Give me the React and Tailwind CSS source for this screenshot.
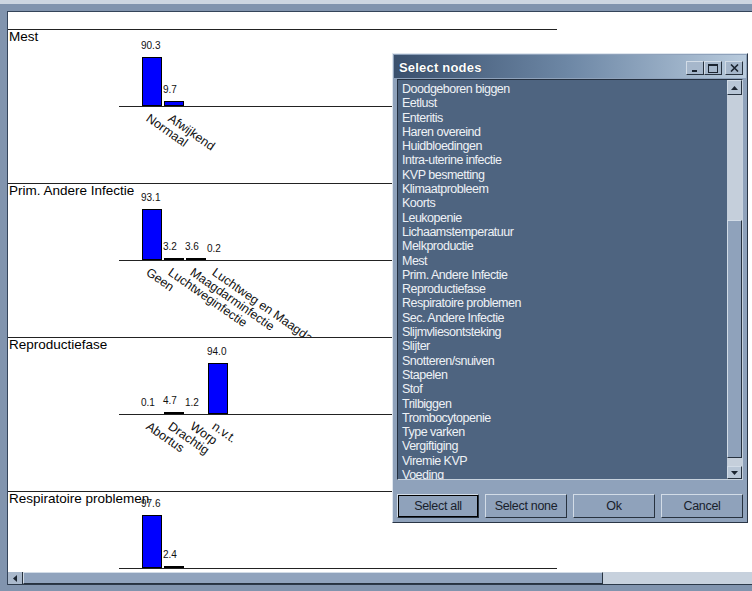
const charts = [
  { title: "Mest", bars: [["Normaal", 90.3], ["Afwijkend", 9.7]] },
  {
    title: "Prim. Andere Infectie",
    bars: [["Geen", 93.1], ["Luchtweginfectie", 3.2], ["Maagdarminfectie", 3.6], ["Luchtweg en Maagdarminfectie", 0.2]],
  },
  { title: "Reproductiefase", bars: [["Abortus", 0.1], ["Drachtig", 4.7], ["Worp", 1.2], ["n.v.t.", 94.0]] },
  { title: "Respiratoire problemen", bars: [["Nee", 97.6], ["Ja", 2.4]] },
];

const nodes = [
  "Doodgeboren biggen", "Eetlust", "Enteritis", "Haren overeind", "Huidbloedingen", "Intra-uterine infectie",
  "KVP besmetting", "Klimaatprobleem", "Koorts", "Leukopenie", "Lichaamstemperatuur", "Melkproductie", "Mest",
  "Prim. Andere Infectie", "Reproductiefase", "Respiratoire problemen", "Sec. Andere Infectie",
  "Slijmvliesontsteking", "Slijter", "Snotteren/snuiven", "Stapelen", "Stof", "Trilbiggen", "Trombocytopenie",
  "Type varken", "Vergiftiging", "Viremie KVP", "Voeding",
];

const raised = "border border-t-[#d2dce7] border-l-[#d2dce7] border-r-[#27323f] border-b-[#27323f]";

const Bar = ({ value }) => {
  const h = Math.floor(value * 0.55);
  return (
    <div className="w-[22px] flex flex-col items-start justify-end">
      <span className="-ml-px mb-[6px] text-[10px] leading-none text-[#111]">{value.toFixed(1)}</span>
      {h > 0 && <div className="w-[20px] border border-black bg-[#0000ff]" style={{ height: Math.max(h, 2) }} />}
    </div>
  );
};

const Chart = ({ title, bars }) => (
  <div className="grid h-[154px] border-b border-[#222] overflow-hidden">
    <div className="[grid-area:1/1] pl-px text-[13.5px] leading-none text-black">{title}</div>
    <div className="[grid-area:1/1] ml-[111px] w-[438px] flex flex-col">
      <div className="h-[77px] border-b border-[#222] flex items-end pl-[23px]">
        {bars.map(([name, v]) => (
          <Bar key={name} value={v} />
        ))}
      </div>
      <div className="flex pl-[32px] -mt-[2px]">
        {bars.map(([name]) => (
          <div key={name} className="w-[22px] h-0">
            <span className="inline-block origin-top-left rotate-[35deg] whitespace-nowrap text-[12.5px] leading-none text-[#111]">
              {name}
            </span>
          </div>
        ))}
      </div>
    </div>
  </div>
);

const Arrow = ({ dir }) => {
  const pts = { up: "0,4 7,4 3.5,0", down: "0,0 7,0 3.5,4", left: "4,0 4,7 0,3.5" }[dir];
  const size = dir === "left" ? [4, 7] : [7, 4];
  return (
    <svg width={size[0]} height={size[1]} viewBox={`0 0 ${size[0]} ${size[1]}`}>
      <polygon points={pts} fill="#1b2430" />
    </svg>
  );
};

const TitleButton = ({ children, className = "" }) => (
  <div className={`w-[18px] h-[14px] bg-[#a6b7cb] ${raised} flex items-center justify-center ${className}`}>{children}</div>
);

const SelectNodes = () => (
  <div className="absolute left-[392px] top-[53px] w-[356px] h-[470px] bg-[#8fa2bb] border border-t-[#dfe6ee] border-l-[#dfe6ee] border-r-[#2a3646] border-b-[#2a3646] flex flex-col px-[4px] pb-[4px]">
    <div className="-mx-[3px] mt-px h-[23px] pl-[5px] pr-[3px] pt-[3px] flex items-center bg-linear-to-r from-[#3a506d] via-[#6e88a6] to-[#b9cbdd]">
      <span className="flex-1 text-[13px] font-bold text-white tracking-[0.2px] [text-shadow:0_0_1px_#20303f]">Select nodes</span>
      <TitleButton>
        <svg width="8" height="8" viewBox="0 0 8 8"><rect x="1" y="6" width="5" height="2" fill="#1b2430" /></svg>
      </TitleButton>
      <TitleButton>
        <svg width="10" height="9" viewBox="0 0 10 9"><rect x="0.5" y="0.5" width="9" height="8" fill="none" stroke="#1b2430" /><rect x="0" y="0" width="10" height="2" fill="#1b2430" /></svg>
      </TitleButton>
      <TitleButton className="ml-[3px]">
        <svg width="9" height="8" viewBox="0 0 9 8"><path d="M1 0.5 L8 7.5 M8 0.5 L1 7.5" stroke="#1b2430" strokeWidth="1.6" /></svg>
      </TitleButton>
    </div>

    <div className="mt-px h-[401px] flex border border-t-[#243040] border-l-[#243040] border-r-[#c7d2de] border-b-[#c7d2de] bg-[#4e6480]">
      <div className="flex-1 overflow-hidden pl-[4px] pt-[2px]">
        {nodes.map((n) => (
          <div key={n} className="text-[12.5px] leading-[14.3px] tracking-[-0.5px] text-[#eef2f6] whitespace-nowrap">
            {n}
          </div>
        ))}
      </div>
      <div className="w-[15px] flex flex-col bg-[#c5cfdb]">
        <div className={`h-[15px] bg-[#b8c6d6] ${raised} flex items-center justify-center`}>
          <Arrow dir="up" />
        </div>
        <div className="h-[125px]" />
        <div className={`h-[238px] bg-[#8fa2bb] ${raised}`} />
        <div className="flex-1" />
        <div className={`h-[13px] bg-[#b8c6d6] ${raised} flex items-center justify-center`}>
          <Arrow dir="down" />
        </div>
      </div>
    </div>

    <div className="mt-[14px] grid grid-cols-4 gap-[6px] h-[24px]">
      {["Select all", "Select none", "Ok", "Cancel"].map((b, i) => (
        <div
          key={b}
          className={`flex items-center justify-center bg-[#8fa2bb] text-[12.5px] tracking-[-0.3px] text-[#18212c] ${raised} ${
            i === 0 ? "outline outline-1 -outline-offset-2 outline-black" : ""
          }`}
        >
          {b}
        </div>
      ))}
    </div>
  </div>
);

export default function App() {
  return (
    <div className="relative w-[752px] h-[591px] overflow-hidden flex flex-col bg-[#ccd5e0] font-['Liberation_Sans',Arial,sans-serif]">
      <div className="h-[4px] bg-[#cdd6e1]" />
      <div className="flex-1 flex flex-col bg-[#8194ae] pl-[7px] pt-[7px] pb-[6px]">
        <div className="flex-1 flex flex-col border-l border-t border-[#34445a]">
          <div className="h-[560px] bg-white overflow-hidden">
            <div className="w-[549px]">
              <div className="h-[18px] border-b border-[#222]" />
              {charts.map((c) => (
                <Chart key={c.title} {...c} />
              ))}
            </div>
          </div>
          {/* horizontal scrollbar */}
          <div className="h-[13px] flex bg-[#c7d1dd] border-b border-[#2c3949]">
            <div className="w-[15px] bg-[#aab9cc] border-r border-[#27323f] flex items-center justify-center">
              <Arrow dir="left" />
            </div>
            <div className={`w-[580px] bg-[#90a3bd] ${raised}`} />
          </div>
        </div>
      </div>
      <SelectNodes />
    </div>
  );
}
